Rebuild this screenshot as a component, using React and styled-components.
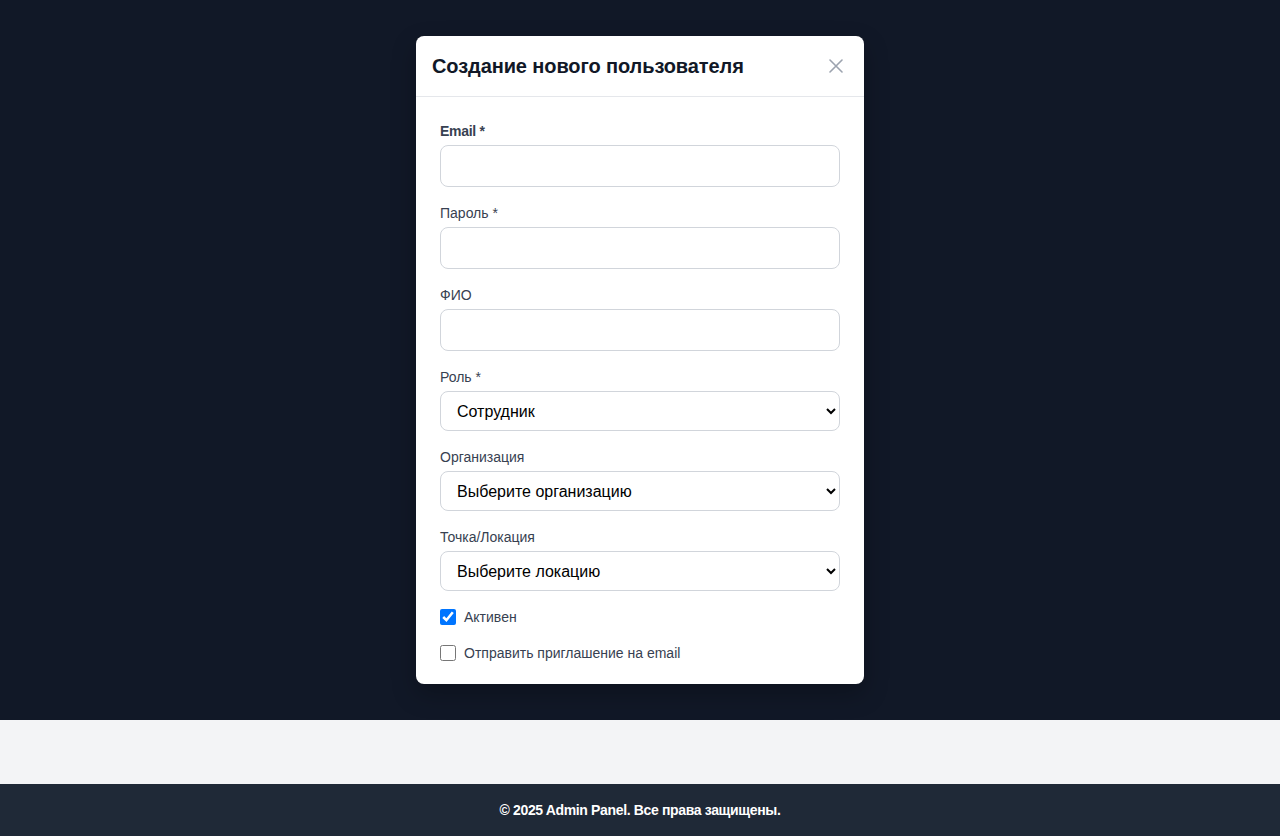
import React from 'react';
import styled, { createGlobalStyle } from 'styled-components';

const GlobalStyle = createGlobalStyle`
  html, body {
    margin: 0;
    padding: 0;
    background: #f3f4f6;
    font-family: 'Liberation Sans', Arial, sans-serif;
  }
  * {
    box-sizing: border-box;
  }
`;

const Page = styled.div`
  display: flex;
  flex-direction: column;
  min-height: 836px;
`;

const Overlay = styled.div`
  height: 720px;
  background: #111827;
  display: flex;
  align-items: center;
  justify-content: center;
`;

const Spacer = styled.div`
  height: 64px;
  background: #f3f4f6;
`;

const Footer = styled.footer`
  height: 52px;
  background: #1f2937;
  color: #ffffff;
  display: flex;
  align-items: center;
  justify-content: center;
  font-size: 14px;
  font-weight: 700;
  letter-spacing: -0.35px;
`;

const Modal = styled.div`
  width: 448px;
  background: #ffffff;
  border-radius: 8px;
  box-shadow: 0 10px 25px rgba(0, 0, 0, 0.25);
  overflow: hidden;
`;

const Header = styled.div`
  height: 61px;
  padding: 0 16px;
  display: flex;
  align-items: center;
  justify-content: space-between;
  border-bottom: 1px solid #e5e7eb;
`;

const Title = styled.h2`
  margin: 0;
  font-size: 20px;
  font-weight: 700;
  color: #111827;
  letter-spacing: -0.1px;
`;

const CloseButton = styled.button`
  width: 24px;
  height: 24px;
  padding: 0;
  border: none;
  background: none;
  display: flex;
  align-items: center;
  justify-content: center;
  color: #9ca3af;
  cursor: pointer;
`;

const Body = styled.form`
  padding: 24px 24px 21px;
  display: flex;
  flex-direction: column;
  gap: 16px;
`;

const Field = styled.div`
  display: flex;
  flex-direction: column;
  gap: 4px;
`;

const Label = styled.label`
  font-size: 14px;
  line-height: 20px;
  font-weight: ${(p) => (p.$strong ? 700 : 400)};
  letter-spacing: ${(p) => (p.$strong ? '-0.3px' : '0')};
  color: #374151;
`;

const Input = styled.input`
  height: 42px;
  width: 100%;
  border: 1px solid #d1d5db;
  border-radius: 8px;
  padding: 10px 12px;
  font-size: 14px;
  font-family: inherit;
  outline: none;
`;

const Select = styled.select`
  height: 40px;
  width: 100%;
  border: 1px solid #d1d5db;
  border-radius: 8px;
  padding: 0 8px 0 12px;
  font-size: 16px;
  font-family: 'Liberation Sans', Arial, sans-serif;
  color: #000000;
  background: #ffffff;
  outline: none;
`;

const CheckRow = styled.label`
  display: flex;
  align-items: center;
  gap: 8px;
  height: 20px;
  font-size: 14px;
  color: #374151;
`;

const Checkbox = styled.input`
  width: 16px;
  height: 16px;
  margin: 0;
  accent-color: #0075ff;
`;

const CloseIcon = () => (
  <svg width="14" height="14" viewBox="0 0 14 14" fill="none" stroke="currentColor" strokeWidth="1.6" strokeLinecap="round">
    <path d="M1 1L13 13M13 1L1 13" />
  </svg>
);

export default function App() {
  return (
    <>
      <GlobalStyle />
      <Page>
        <Overlay>
          <Modal>
            <Header>
              <Title>Создание нового пользователя</Title>
              <CloseButton type="button">
                <CloseIcon />
              </CloseButton>
            </Header>
            <Body onSubmit={(e) => e.preventDefault()}>
              <Field>
                <Label $strong>Email *</Label>
                <Input type="email" />
              </Field>
              <Field>
                <Label>Пароль *</Label>
                <Input type="password" />
              </Field>
              <Field>
                <Label>ФИО</Label>
                <Input type="text" />
              </Field>
              <Field>
                <Label>Роль *</Label>
                <Select defaultValue="employee">
                  <option value="employee">Сотрудник</option>
                  <option value="admin">Администратор</option>
                </Select>
              </Field>
              <Field>
                <Label>Организация</Label>
                <Select defaultValue="">
                  <option value="">Выберите организацию</option>
                </Select>
              </Field>
              <Field>
                <Label>Точка/Локация</Label>
                <Select defaultValue="">
                  <option value="">Выберите локацию</option>
                </Select>
              </Field>
              <CheckRow>
                <Checkbox type="checkbox" defaultChecked />
                Активен
              </CheckRow>
              <CheckRow>
                <Checkbox type="checkbox" />
                Отправить приглашение на email
              </CheckRow>
            </Body>
          </Modal>
        </Overlay>
        <Spacer />
        <Footer>© 2025 Admin Panel. Все права защищены.</Footer>
      </Page>
    </>
  );
}
